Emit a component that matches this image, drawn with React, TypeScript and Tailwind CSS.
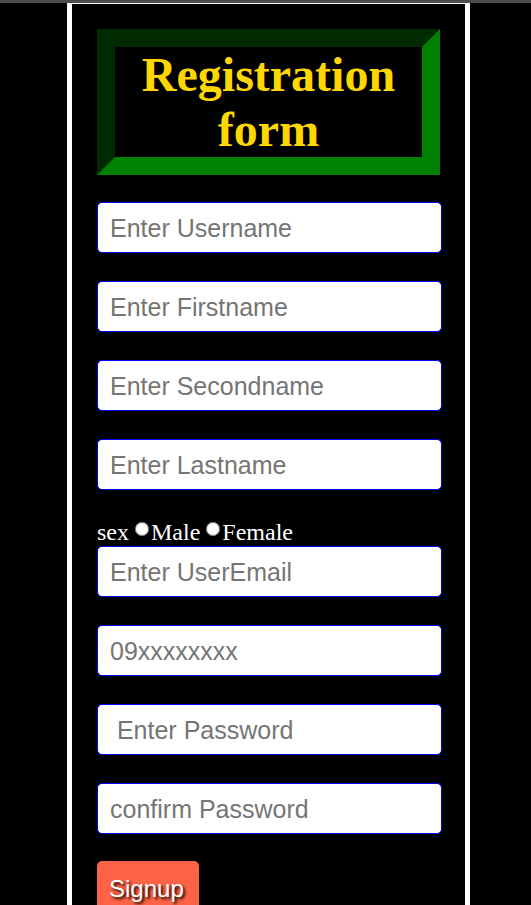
import React from "react";

const inputCls =
  "block w-[345px] h-[51px] mb-[28px] bg-white border border-[#0000ff] rounded-[5px] pl-[12px] pt-[1px] text-[25px] font-['Liberation_Sans',Arial,sans-serif] text-black placeholder:text-[#757575] outline-none";

export default function App() {
  return (
    <div className="h-[905px] overflow-hidden bg-black">
      <div className="h-[3px] bg-[#4d4d4d]" />
      <div className="ml-[67px] w-[403px] h-[1000px] border-x-[5px] border-t border-white px-[25px] pt-[25px]">
        <div className="w-[343px] border-[18px] border-t-[#002b00] border-l-[#002b00] border-b-[#008000] border-r-[#008000] mb-[27px]">
          <h1 className="text-center text-[48px] leading-[55px] font-bold text-[#ffd700] font-['Liberation_Serif','Times_New_Roman',serif]">
            Registration form
          </h1>
        </div>
        <form onSubmit={(e) => e.preventDefault()}>
          <input className={inputCls} placeholder="Enter Username" />
          <input className={inputCls} placeholder="Enter Firstname" />
          <input className={inputCls} placeholder="Enter Secondname" />
          <input className={inputCls} placeholder="Enter Lastname" />
          <div className="h-[28px] leading-[28px] text-[24px] text-white font-['Liberation_Serif','Times_New_Roman',serif] whitespace-nowrap">
            sex{" "}
            <input type="radio" name="sex" className="m-0 mr-[2px] w-[14px] h-[14px] align-[4px]" />
            Male{" "}
            <input type="radio" name="sex" className="m-0 mr-[2px] w-[14px] h-[14px] align-[4px]" />
            Female
          </div>
          <input className={inputCls} placeholder="Enter UserEmail" />
          <input className={inputCls} placeholder="09xxxxxxxx" />
          <input className={inputCls} type="password" placeholder=" Enter Password" />
          <input className={inputCls.replace("mb-[28px]", "mb-[27px]")} type="password" placeholder="confirm Password" />
          <button
            type="submit"
            className="block w-[102px] h-[60px] bg-[#ff6347] rounded-[5px] text-left pl-[12px] pb-[5px] text-[24px] text-white font-['Liberation_Sans',Arial,sans-serif] [text-shadow:2px_2px_3px_#000]"
          >
            Signup
          </button>
        </form>
      </div>
    </div>
  );
}
